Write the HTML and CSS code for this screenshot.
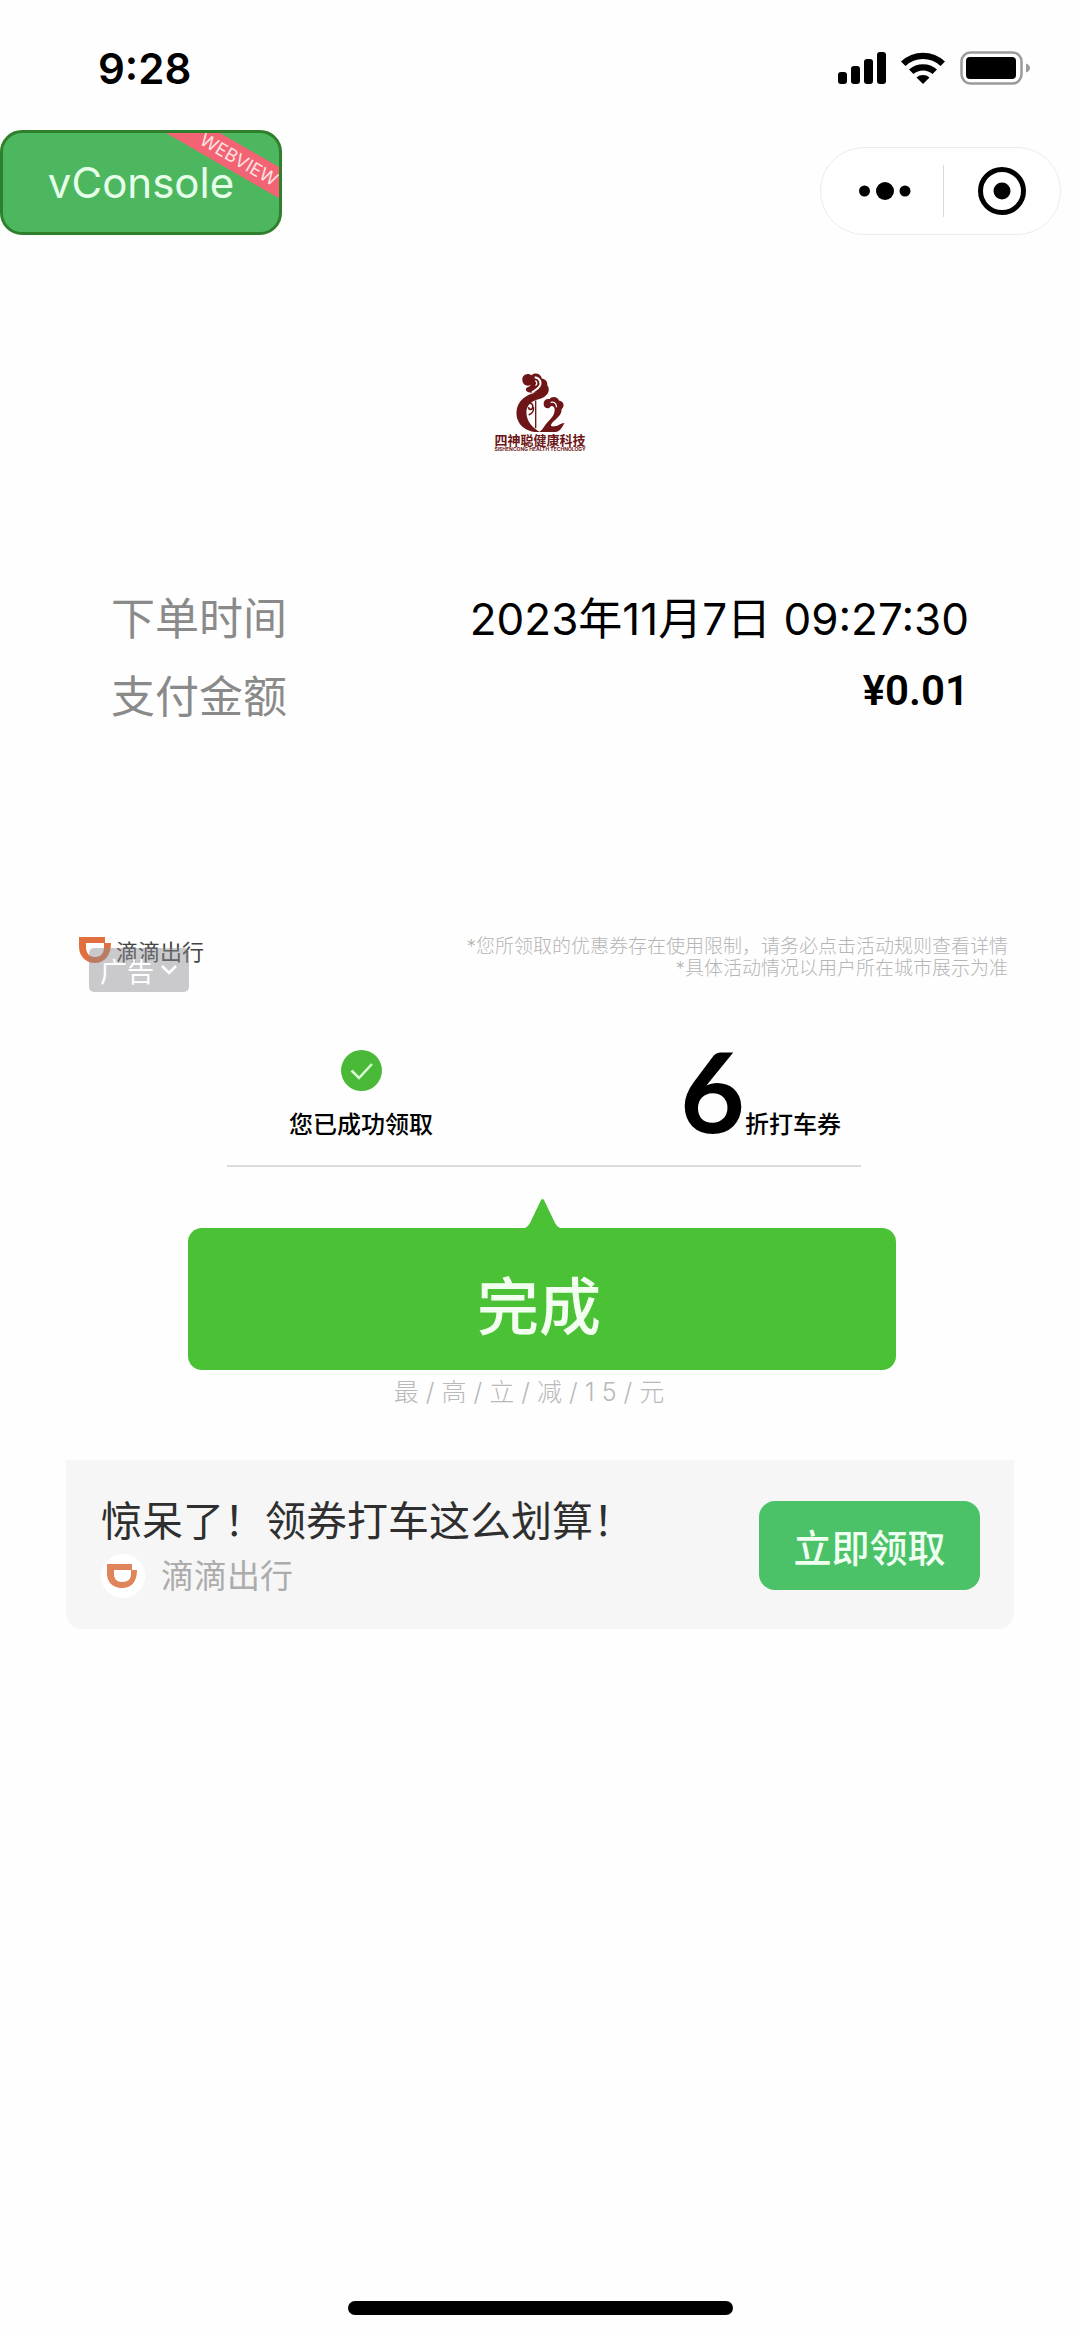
FILE: index.html
```html
<!DOCTYPE html>
<html lang="zh-CN">
  <head>
    <meta charset="UTF-8" />
    <meta name="viewport" content="width=device-width, initial-scale=1.0" />
    <title>支付完成</title>
    <link rel="stylesheet" href="styles.css">
  </head>
  <body>
    <header class="status-bar">
      <span class="time">9:28</span>
      <div class="status-icons">
        <svg width="48" height="34" viewBox="0 0 48 34">
          <rect x="0" y="21" width="9" height="12" rx="3" />
          <rect x="13" y="15" width="9" height="18" rx="3" />
          <rect x="26" y="8" width="9" height="25" rx="3" />
          <rect x="39" y="1" width="9" height="32" rx="3" />
        </svg>
        <svg width="46" height="34" viewBox="0 0 46 34">
          <path d="M1 10.500A32 32 0 0 1 45 10.500L40.500 15A25.500 25.500 0 0 0 5.500 15Z" />
          <path d="M9 18.500A21 21 0 0 1 37 18.500L32.500 23A14.500 14.500 0 0 0 13.500 23Z" />
          <path d="M16.500 26.500A10 10 0 0 1 29.500 26.500L23 33Z" />
        </svg>
        <svg width="70" height="34" viewBox="0 0 70 34">
          <rect x="1.500" y="1.500" width="60" height="31" rx="9" fill="none" stroke="#9b9b9b" stroke-width="2.500" />
          <rect x="6" y="6" width="50" height="22" rx="4" />
          <path d="M66 12.500Q70 14 70 17T66 21.500Z" fill="#9b9b9b" />
        </svg>
      </div>
    </header>

    <nav class="nav-bar">
      <button class="vconsole" type="button">vConsole<span class="ribbon">WEBVIEW</span></button>
      <div class="capsule">
        <button type="button" aria-label="更多">
          <svg width="52" height="20" viewBox="0 0 52 20">
            <circle cx="5.500" cy="10" r="5.500" />
            <circle cx="26" cy="10" r="9" />
            <circle cx="46" cy="10" r="5.500" />
          </svg>
        </button>
        <button type="button" aria-label="关闭">
          <svg width="48" height="48" viewBox="0 0 48 48">
            <circle cx="24" cy="24" r="21.500" fill="none" stroke="#000" stroke-width="5" />
            <circle cx="24" cy="24" r="8.500" />
          </svg>
        </button>
      </div>
    </nav>

    <main>
      <div class="brand">
        <svg width="52" height="61" viewBox="72 18 156 184" fill="#6d1517">
          <path d="M142 80C108 84 80 106 79 140C78 174 106 199 142 199H150C128 188 110 168 109 142C108 120 122 106 146 100C172 94 184 74 172 58C174 46 164 38 156 38C152 22 134 18 124 28C112 18 94 28 97 44C98 58 114 64 122 56C120 64 112 62 108 68C104 80 122 82 142 80Z" />
          <path d="M134 34C150 36 156 50 148 62C142 72 132 72 126 80" fill="none" stroke="#fff" stroke-width="6" />
          <path d="M136 44C142 48 142 56 136 58" fill="none" stroke="#fff" stroke-width="4" />
          <path d="M162 120C158 106 168 98 178 100C186 90 204 92 207 104C222 106 226 122 215 130C216 146 202 156 192 166C182 176 178 184 194 182C206 181 214 171 224 172C218 182 212 197 198 199H148C160 190 164 178 174 168C186 156 196 144 194 128C192 120 184 118 180 124C176 130 164 128 162 120Z" />
          <path d="M182 110C190 106 200 112 200 124" fill="none" stroke="#fff" stroke-width="4" />
          <path d="M106 120C110 106 130 110 128 124C126 134 114 132 116 124M116 148C126 144 132 134 130 124" fill="none" stroke="#6d1517" stroke-width="5" />
          <path d="M135 104H139V188H135Z" />
        </svg>
        <span class="brand-name">四神聪健康科技</span>
        <span class="brand-latin">SISHENCONG HEALTH TECHNOLOGY</span>
      </div>

      <dl class="order">
        <div>
          <dt>下单时间</dt>
          <dd>2023年11月7日 09:27:30</dd>
        </div>
        <div>
          <dt>支付金额</dt>
          <dd class="amount">¥0.01</dd>
        </div>
      </dl>

      <section class="ad">
        <div class="ad-head">
          <div class="ad-brand">
            <svg width="32" height="26" viewBox="0 0 32 26">
              <path d="M0 0H26V6H32C32 18 26 26 16 26C6 26 0 18 0 10ZM7 6V10C7 16 10 20 16 20C22 20 25 16 25 10V6Z" fill="#e2703f" fill-rule="evenodd" />
            </svg>
            <span>滴滴出行</span>
            <button class="ad-tag" type="button">广告
              <svg width="18" height="12" viewBox="0 0 18 12">
                <path d="M2 2L9 9L16 2" fill="none" stroke="#fff" stroke-width="2.500" />
              </svg>
            </button>
          </div>
          <p class="notes">*您所领取的优惠券存在使用限制，请务必点击活动规则查看详情<br>*具体活动情况以用户所在城市展示为准</p>
        </div>

        <div class="coupon">
          <div class="received">
            <svg width="41" height="41" viewBox="0 0 41 41">
              <circle cx="20.500" cy="20.500" r="20.500" fill="#4ab937" />
              <path d="M10.500 20.500L18 28L31 14" fill="none" stroke="#dcffd5" stroke-width="2.500" />
            </svg>
            <span>您已成功领取</span>
          </div>
          <div class="discount"><b>6</b>折打车券</div>
        </div>

        <div class="finish">
          <svg width="35" height="29" viewBox="0 0 35 29"><path d="M0 29Q3 28 5 24L16 1Q17.500 -1 19 1L30 24Q32 28 35 29Z" fill="#4bc136" /></svg>
          <button type="button">完成</button>
          <p>最 / 高 / 立 / 减 / 1 5 / 元</p>
        </div>

        <footer class="ad-foot">
          <div>
            <h2>惊呆了！领券打车这么划算！</h2>
            <div class="advertiser">
              <svg width="44" height="44" viewBox="0 0 44 44">
                <circle cx="22" cy="22" r="22" fill="#fff" />
                <path transform="translate(6 10)" d="M0 0H25V6H30C30 17 25 24 15 24C5 24 0 17 0 10ZM7 6V10C7 15 10 18 15 18C21 18 24 15 24 10V6Z" fill="#df845b" fill-rule="evenodd" />
              </svg>
              <span>滴滴出行</span>
            </div>
          </div>
          <button class="claim" type="button">立即领取</button>
        </footer>
      </section>
    </main>

    <div class="home-indicator"></div>
  </body>
</html>
```
FILE: styles.css
```css
* {
    box-sizing: border-box;
}

body {
    margin: 0;
    min-height: 100vh;
    display: flex;
    flex-direction: column;
    background-color: #fefefe;
    color: #000;
    font-family: Inter, "Noto Sans CJK SC", sans-serif;
}

button {
    border: 0;
    padding: 0;
    background: none;
    font-family: inherit;
    cursor: pointer;
}

svg {
    display: block;
    flex: none;
}

p, h2, dl, dd {
    margin: 0;
}

main {
    flex: 1;
}

/* status bar */
.status-bar {
    display: flex;
    justify-content: space-between;
    align-items: center;
    height: 130px;
    padding: 6px 50px 0 98px;
}

.time {
    font-size: 42px;
    font-weight: 600;
}

.status-icons {
    display: flex;
    gap: 14px;
}

/* top row with the debug button and the capsule menu */
.nav-bar {
    display: flex;
    justify-content: space-between;
    align-items: flex-end;
    padding-right: 19px;
}

.vconsole {
    position: relative;
    overflow: hidden;
    width: 282px;
    height: 105px;
    border: 3px solid #2f7f2c;
    border-radius: 22px;
    background-color: #4db760;
    color: #e6ffe9;
    font-size: 42px;
}

.ribbon {
    position: absolute;
    top: 13px;
    right: -40px;
    width: 160px;
    transform: rotate(30deg);
    background-color: #f26474;
    color: #ffe3e3;
    font-size: 18px;
    line-height: 27px;
    text-align: center;
}

.capsule {
    display: flex;
    align-items: center;
    width: 241px;
    height: 88px;
    border: 1px solid #ececec;
    border-radius: 44px;
    background-color: #fff;
}

.capsule button {
    flex: 1;
    display: flex;
    justify-content: center;
    align-items: center;
    height: 52px;
    padding-left: 6px;
}

.capsule button + button {
    padding-left: 0;
    border-left: 1px solid #d9d9d9;
}

/* merchant logo */
.brand {
    display: flex;
    flex-direction: column;
    align-items: center;
    padding-top: 137px;
    color: #6d1517;
}

.brand-name {
    font-size: 13px;
    font-weight: 700;
    line-height: 14px;
}

.brand-latin {
    font-size: 5px;
    font-weight: 700;
    line-height: 5px;
}

/* order */
.order {
    padding: 128px 111px 0 111px;
    font-size: 44px;
    line-height: 78px;
}

.order div {
    display: flex;
    justify-content: space-between;
}

.order dt {
    color: #8a8a8a;
}

.order .amount {
    font-family: Roboto, sans-serif;
    font-size: 42px;
    font-weight: 600;
    line-height: 66px;
}

/* ad card */
.ad {
    margin: 194px 66px 0 66px;
}

.ad-head {
    display: flex;
    justify-content: space-between;
    padding: 6px 6px 0 13px;
}

.ad-brand {
    position: relative;
    display: flex;
    gap: 5px;
    height: 27px;
    align-items: center;
    color: #444;
    font-size: 22px;
}

/* sits over the advertiser's name */
.ad-tag {
    position: absolute;
    left: 10px;
    top: 12px;
    display: flex;
    align-items: center;
    gap: 6px;
    padding: 0 11px;
    height: 44px;
    border-radius: 5px;
    background-color: rgba(140, 140, 146, 0.45);
    color: #fff;
    font-size: 27px;
    white-space: nowrap;
}

.notes {
    color: #b5b5b5;
    font-size: 19px;
    font-weight: 300;
    line-height: 22px;
    text-align: right;
}

.coupon {
    display: flex;
    justify-content: space-between;
    align-items: flex-end;
    margin: 70px 153px 0 161px;
    padding: 0 20px 22px 62px;
    border-bottom: 2px solid #dcdcdc;
    font-size: 24px;
    font-weight: 500;
    line-height: 36px;
}

.received {
    display: flex;
    flex-direction: column;
    align-items: center;
    gap: 16px;
}

.discount {
    display: flex;
    align-items: baseline;
}

.discount b {
    font-family: Lato, sans-serif;
    font-size: 112px;
    font-weight: 700;
    line-height: 80px;
}

.finish {
    display: flex;
    flex-direction: column;
    align-items: center;
    padding: 32px 118px 0 122px;
}

.finish button {
    width: 100%;
    height: 142px;
    padding: 8px 6px 0 0;
    border-radius: 14px;
    background-color: #4bc136;
    color: #f2fff0;
    font-size: 62px;
    font-weight: 500;
}

.finish p {
    padding: 4px 26px 0 0;
    color: #b9b9b9;
    font-size: 25px;
    font-weight: 300;
    line-height: 36px;
}

.ad-foot {
    display: flex;
    justify-content: space-between;
    align-items: center;
    margin-top: 50px;
    padding: 30px 34px 29px 35px;
    border-radius: 0 0 16px 16px;
    background-color: #f6f6f6;
}

.ad-foot h2 {
    color: #2f2f2f;
    font-size: 41px;
    font-weight: 400;
    line-height: 62px;
}

.advertiser {
    display: flex;
    align-items: center;
    gap: 16px;
    color: #acacac;
    font-size: 33px;
    line-height: 48px;
}

.claim {
    width: 221px;
    height: 89px;
    border-radius: 16px;
    background-color: #4bc267;
    color: #effff1;
    font-size: 38px;
    font-weight: 500;
}

.home-indicator {
    width: 385px;
    height: 14px;
    margin: 0 auto 22px auto;
    border-radius: 7px;
    background-color: #000;
}
```
